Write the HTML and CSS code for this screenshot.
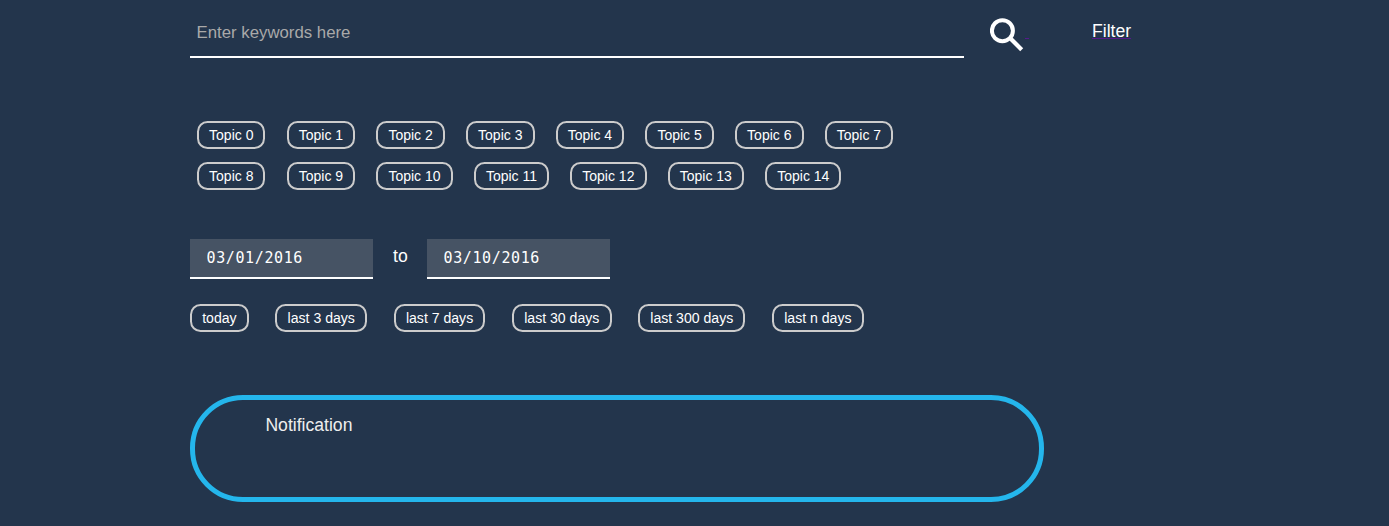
FILE: index.html
```
<!DOCTYPE html>
<html lang="en">
<head>
<meta charset="utf-8">
<title>Search</title>
<link rel="stylesheet" href="styles.css">
</head>
<body>
<main class="page">
  <header class="search">
    <input class="search-input" type="text" placeholder="Enter keywords here">
    <a class="search-button" href="#" aria-label="Search"><svg class="search-icon" viewBox="0 0 34 34" fill="none" stroke="#fff"><circle cx="12.4" cy="12.7" r="10.5" stroke-width="4"/><path d="M21 21 31.7 31.8" stroke-width="4.2"/></svg><span class="link-space">&nbsp;</span></a>
    <a class="filter" href="#">Filter</a>
  </header>
  <section class="topics">
    <div class="topic-row">
      <button class="pill">Topic 0</button><button class="pill">Topic 1</button><button class="pill">Topic 2</button><button class="pill">Topic 3</button><button class="pill">Topic 4</button><button class="pill">Topic 5</button><button class="pill">Topic 6</button><button class="pill">Topic 7</button>
    </div>
    <div class="topic-row">
      <button class="pill">Topic 8</button><button class="pill">Topic 9</button><button class="pill">Topic 10</button><button class="pill">Topic 11</button><button class="pill">Topic 12</button><button class="pill">Topic 13</button><button class="pill">Topic 14</button>
    </div>
  </section>
  <section class="dates">
    <input class="date" type="text" value="03/01/2016">
    <span class="to">to</span>
    <input class="date" type="text" value="03/10/2016">
  </section>
  <section class="ranges">
    <button class="pill">today</button><button class="pill">last 3 days</button><button class="pill">last 7 days</button><button class="pill">last 30 days</button><button class="pill">last 300 days</button><button class="pill">last n days</button>
  </section>
  <section class="notification">Notification</section>
</main>
</body>
</html>
```
FILE: styles.css
```
* { box-sizing: border-box; }
body {
  margin: 0;
  background: #23354c;
  color: #fff;
  font: 17.6px/20px "Liberation Sans", Arial, sans-serif;
}
.page { padding-left: 190px; height: 526px; overflow: hidden; }
.search { display: flex; height: 58px; }
.search-input {
  width: 774px;
  height: 58px;
  padding: 10px 6.5px 0;
  border: 0;
  border-bottom: 2px solid #fff;
  border-radius: 0;
  background: transparent;
  color: #fff;
  font: 16.8px "Liberation Sans", Arial, sans-serif;
  outline: 0;
}
.search-input::placeholder { color: #a9a9a9; opacity: 1; }
.search-button { display: flex; width: 102px; margin: 18px 0 0 26px; color: #551a8b; text-decoration: none; }
.search-icon { width: 34px; height: 34px; }
.link-space { width: 4px; height: 21px; margin-left: 1px; border-bottom: 1px solid #551a8b; overflow: hidden; }
.filter {
  align-self: flex-start;
  margin-top: 21px;
  color: #fff;
  text-decoration: underline #551a8b 1px;
  text-underline-offset: 1px;
}
.topics { display: grid; gap: 13px; margin: 63px 0 0 7px; }
.topic-row { display: flex; gap: 21.2px; }
.pill {
  height: 28px;
  padding: 0 10.2px;
  border: 2px solid #ccc;
  border-radius: 10.5px;
  background: transparent;
  color: #fff;
  font: 14.08px "Liberation Sans", Arial, sans-serif;
  white-space: nowrap;
}
.topic-row .pill { padding: 0 10.07px; font-size: 14px; }
.dates { display: flex; margin-top: 49px; }
.date {
  width: 183px;
  height: 40px;
  padding: 0 16.6px;
  border: 0;
  border-bottom: 2px solid #fff;
  border-radius: 0;
  background: #465364;
  color: #fff;
  font: 15px "DejaVu Sans Mono", monospace;
  letter-spacing: 0.6px;
  outline: 0;
}
.to { width: 54px; padding: 7px 0 0 20px; }
.ranges { display: flex; gap: 26.6px; margin-top: 25px; }
.notification {
  width: 854px;
  height: 107px;
  margin-top: 63px;
  padding: 15px 70.4px;
  border: 5px solid #24b6ec;
  border-radius: 53px;
  color: #eee;
}
```
